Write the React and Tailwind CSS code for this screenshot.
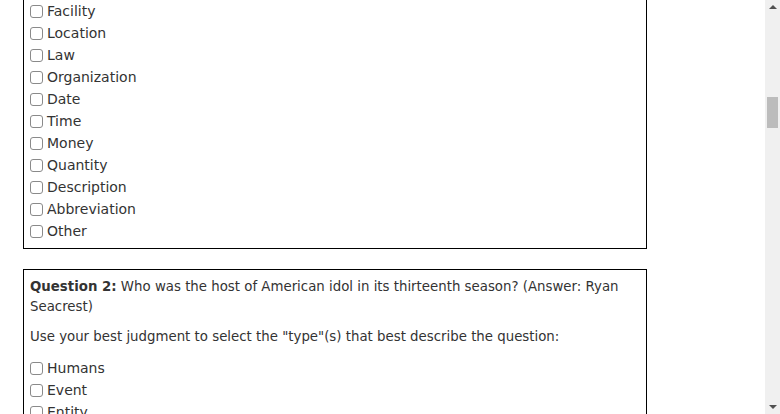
import React from "react";

const firstList = [
  "Facility",
  "Location",
  "Law",
  "Organization",
  "Date",
  "Time",
  "Money",
  "Quantity",
  "Description",
  "Abbreviation",
  "Other",
];

const secondList = ["Humans", "Event", "Entity"];

function TypeRow({ label }) {
  return (
    <label className="flex h-[22px] items-center">
      <input
        type="checkbox"
        className="m-0 h-[13px] w-[13px] appearance-none rounded-[3px] border border-[#8a8a8a] bg-white"
      />
      <span className="ml-[4px]">{label}</span>
    </label>
  );
}

function Scrollbar() {
  return (
    <div className="relative h-full w-[15px] shrink-0 bg-[#f0f0f0]">
      <div className="absolute left-[4px] top-[5px] h-0 w-0 border-x-[4px] border-b-[4px] border-x-transparent border-b-[#505050]" />
      <div className="absolute left-[2px] top-[97px] h-[31px] w-[11px] bg-[#bcbcbc]" />
      <div className="absolute bottom-[5px] left-[4px] h-0 w-0 border-x-[4px] border-t-[4px] border-x-transparent border-t-[#505050]" />
    </div>
  );
}

export default function App() {
  return (
    <div
      className="flex h-[414px] w-[780px] overflow-hidden bg-white text-[14px] text-[#333]"
      style={{ fontFamily: '"DejaVu Sans", sans-serif' }}
    >
      <div className="flex-1 overflow-hidden pl-[23px]">
        {/* question 1, top cut off by scroll */}
        <div className="w-[624px] border-x border-b border-black px-[6px] pb-[6px]">
          {firstList.map((t) => (
            <TypeRow key={t} label={t} />
          ))}
        </div>

        <div className="mt-[20px] w-[624px] border border-black px-[6px] pt-[7px]">
          <p className="text-[13.33px] leading-[19.5px]">
            <b>Question 2:</b> Who was the host of American idol in its thirteenth
            season? (Answer: Ryan Seacrest)
          </p>
          <p className="mt-[11px] text-[13.33px] leading-[19px]">
            Use your best judgment to select the "type"(s) that best describe the question:
          </p>
          <div className="mt-[11px]">
            {secondList.map((t) => (
              <TypeRow key={t} label={t} />
            ))}
          </div>
        </div>
      </div>
      <Scrollbar />
    </div>
  );
}
